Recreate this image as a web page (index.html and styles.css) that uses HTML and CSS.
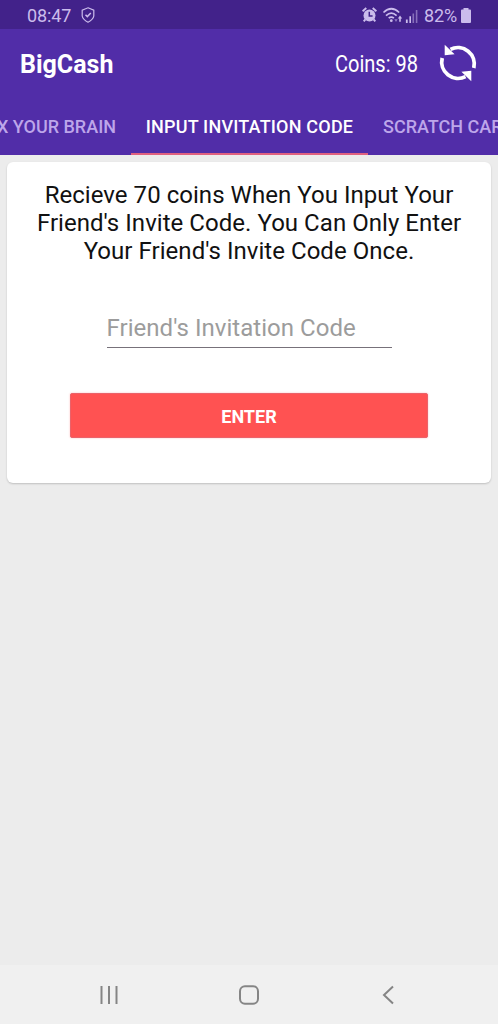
FILE: index.html
```html
<!DOCTYPE html>
<html lang="en">
<head>
<meta charset="utf-8">
<title>BigCash</title>
<link rel="stylesheet" href="styles.css">
</head>
<body>
<div class="screen">
  <div class="status">
    <span class="time">08:47</span>
    <svg class="shield" width="14" height="16" viewBox="0 0 14 16" fill="none" stroke="currentColor" stroke-width="1.2"><path d="M7 .8 12.8 3.2V9Q12.2 12.6 7 15.2 1.8 12.6 1.2 9V3.2Z"/><path d="M4.5 7.8 6.3 9.6 9.8 6" stroke-width="1.5"/></svg>
    <svg class="signals" width="56" height="18" viewBox="0 0 56 18" fill="currentColor">
      <circle cx="7.5" cy="9.5" r="6"/>
      <path d="M.6 5.2 4.3 2M14.4 5.2 10.7 2M3.3 13.5 1.7 15.3M11.7 13.5 13.3 15.3" fill="none" stroke="currentColor" stroke-width="1.9"/>
      <path class="hands" d="M7.3 5.8V10H10.6"/>
      <path d="M21.5 6.5Q29.3-1 37.2 6.5M24 9.6Q29.3 4.6 34.6 9.6M26.7 12.2Q29.3 10 31.9 12.2" fill="none" stroke="currentColor" stroke-width="1.7"/>
      <circle cx="29.3" cy="14.7" r="1.4"/>
      <path d="M38 9.5 40.2 12.5H38.8V15.8H37.2V12.5H35.8Z"/>
      <path d="M34 16 32.4 13.3H35.6Z" opacity=".6"/>
      <path d="M43.9 13.4h1.8v3.6h-1.8zM47.4 10.2h1.6v6.8h-1.6z"/>
      <path d="M50.5 7.4h1.6v9.6h-1.6zM53.8 4h1.6v13h-1.6z" opacity=".5"/>
    </svg>
    <span class="percent">82%</span>
    <svg class="battery" width="10" height="15" viewBox="0 0 10 15" fill="currentColor"><path d="M2.5 0H7.5V1.5H9Q10 1.5 10 2.5V14Q10 15 9 15H1Q0 15 0 14V2.5Q0 1.5 1 1.5H2.5Z"/></svg>
  </div>
  <header class="toolbar">
    <h1 class="title">BigCash</h1>
    <span class="coins">Coins: 98</span>
    <svg class="refresh" width="38" height="40" viewBox="0 0 38 40"><g fill="none" stroke="#fff" stroke-width="3.8"><path d="M11.5 6.4A16.4 16.4 0 0 1 34.8 25"/><path d="M3.2 15A16.4 16.4 0 0 0 26.5 33.6"/></g><path d="M5.7 1.8V12.3L15.6 11.3ZM32.3 38.2V27.7L22.4 28.7Z" fill="#fff"/></svg>
  </header>
  <nav class="tabs">
    <span class="tab tab-brain"><span>X YOUR BRAIN</span></span>
    <span class="tab tab-active"><span>INPUT INVITATION CODE</span></span>
    <span class="tab tab-scratch"><span>SCRATCH CARD</span></span>
  </nav>
  <main class="content">
    <section class="card">
      <p class="message"><span>Recieve 70 coins When You Input Your</span><br><span>Friend's Invite Code. You Can Only Enter</span><br><span>Your Friend's Invite Code Once.</span></p>
      <div class="field"><span>Friend's Invitation Code</span></div>
      <button class="enter">ENTER</button>
    </section>
  </main>
  <footer class="navbar">
    <svg width="20" height="20" viewBox="0 0 20 20"><path d="M2.5 1V19M10 1V19M17.5 1V19"/></svg>
    <svg width="20" height="20" viewBox="0 0 20 20"><rect x="1" y="1.2" width="18" height="17.6" rx="5"/></svg>
    <svg width="20" height="20" viewBox="0 0 20 20"><path d="M15 1.5 6 10 15 18.5"/></svg>
  </footer>
</div>
</body>
</html>
```
FILE: styles.css
```css
* { box-sizing: border-box; }
body { margin: 0; font-family: Roboto, "Liberation Sans", sans-serif; }
.screen { width: 498px; height: 1024px; display: flex; flex-direction: column; background: #ececec; overflow: hidden; }
.status { height: 29px; flex: none; display: flex; align-items: center; padding: 2px 27px 0 27px; background: #42228a; color: #cbbcec; font-size: 18px; }
.time { width: 45px; letter-spacing: -.1px; }
.shield { margin-left: 9px; margin-top: -2px; }
.signals { margin-left: auto; margin-top: -1px; }
.hands { fill: none; stroke: #42228a; stroke-width: 1.5; }
.percent { margin-left: 6px; width: 34px; letter-spacing: -.1px; }
.battery { margin-left: 3px; margin-top: -1px; }
.toolbar { height: 70px; flex: none; display: flex; align-items: center; padding: 0 21.5px 0 20px; background: #512da8; color: #fff; }
.title { margin: 0; font-size: 25px; font-weight: 700; letter-spacing: 0; }
.coins { margin-left: auto; width: 83px; white-space: nowrap; font-size: 23px; transform: scaleX(.87); transform-origin: left; }
.refresh { margin-left: 21px; margin-top: -3px; }
.tabs { height: 56px; flex: none; display: flex; background: #512da8; font-size: 18px; font-weight: 500; white-space: nowrap; overflow: hidden; color: #bda6ea; }
.tab { flex: none; display: flex; align-items: center; justify-content: center; border-bottom: 2px solid transparent; }
.tab-brain { width: 131px; justify-content: flex-end; padding-right: 15px; }
.tab-active { width: 237px; color: #fff; border-bottom-color: #e0607f; letter-spacing: .2px; }
.tab-scratch { padding-left: 15px; }
.content { flex: 1; padding: 7px; }
.card { height: 321px; display: flex; flex-direction: column; align-items: center; padding-top: 19px; background: #fff; border-radius: 6px; box-shadow: 0 1px 2px #00000030; }
.message { margin: 0; text-align: center; font-size: 24px; line-height: 28px; color: #111; white-space: nowrap; letter-spacing: .04px; }
.field { margin-top: 45px; width: 285px; height: 38px; padding-top: 4px; border-bottom: 1px solid #77717a; font-size: 24px; line-height: 28px; color: #9c9c9c; white-space: nowrap; letter-spacing: .04px; }
.enter { margin-top: 45px; width: 358px; height: 45px; padding: 2px 0 0; border: 1px solid #ea626a; border-radius: 2px; background: #ff5252; color: #fff; font: 700 18px Roboto, sans-serif; box-shadow: 0 0 2px #ff525266; }
.navbar { height: 59px; flex: none; display: flex; justify-content: center; align-items: center; gap: 119.5px; padding: 0 1px 0 0; background: #f0f0f0; }
.navbar svg { fill: none; stroke: #858585; stroke-width: 2; }
```
